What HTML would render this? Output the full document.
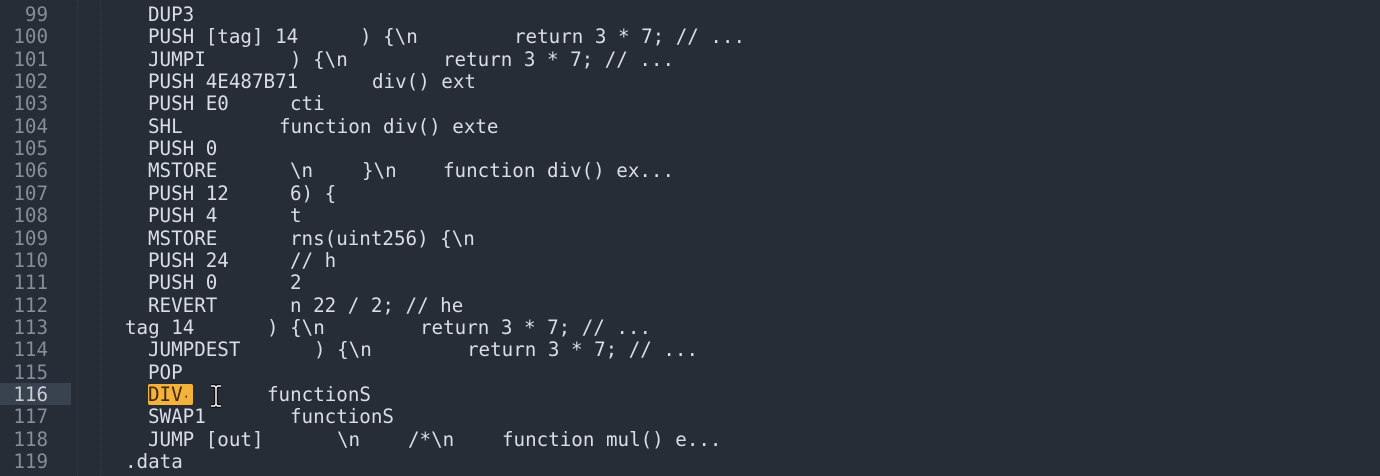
<!DOCTYPE html>
<html><head><meta charset="utf-8"><style>
body{margin:0;width:1380px;height:476px;background:#272d37;overflow:hidden;position:relative;font-family:"DejaVu Sans Mono","Liberation Mono",monospace;font-size:19.2px;color:#d9dee4}
.l{position:absolute;left:0;width:1380px;height:22.35px;line-height:22.35px}
.n{position:absolute;right:1332px;color:#868d97}
.t{position:absolute;white-space:pre}
.g{position:absolute;top:0;bottom:0;width:0;border-left:1px dotted #363d47}
</style></head><body>
<div style="position:absolute;left:0;top:383px;width:71px;height:22px;background:#38434f"></div>
<div class="g" style="left:77px"></div>
<div class="g" style="left:100px"></div>
<div style="position:absolute;left:148px;top:384px;width:45px;height:21px;background:#f4b23a;border-radius:2px"></div>
<svg style="position:absolute;left:208px;top:384px" width="16" height="24" viewBox="0 0 16 24"><path d="M3 2h3.5l1.5 1.5 1.5-1.5H13M8 3.5v17M3 22h3.5L8 20.5 9.5 22H13" stroke="#000" stroke-width="3.4" fill="none"/><path d="M3 2h3.5l1.5 1.5 1.5-1.5H13M8 3.5v17M3 22h3.5L8 20.5 9.5 22H13" stroke="#fff" stroke-width="1.5" fill="none"/></svg>
<div id="c"></div>
<script>
var L=[
[99,[[148,"DUP3"]]],
[100,[[148,"PUSH [tag] 14"],[360,") {\\n"],[514,"return 3 * 7; // ..."]]],
[101,[[148,"JUMPI"],[290,") {\\n"],[443,"return 3 * 7; // ..."]]],
[102,[[148,"PUSH 4E487B71"],[372,"div() ext"]]],
[103,[[148,"PUSH E0"],[290,"cti"]]],
[104,[[148,"SHL"],[279,"function div() exte"]]],
[105,[[148,"PUSH 0"]]],
[106,[[148,"MSTORE"],[290,"\\n"],[362,"}\\n"],[443,"function div() ex..."]]],
[107,[[148,"PUSH 12"],[290,"6) {"]]],
[108,[[148,"PUSH 4"],[290,"t"]]],
[109,[[148,"MSTORE"],[290,"rns(uint256) {\\n"]]],
[110,[[148,"PUSH 24"],[290,"// h"]]],
[111,[[148,"PUSH 0"],[290,"2"]]],
[112,[[148,"REVERT"],[290,"n 22 / 2; // he"]]],
[113,[[125,"tag 14"],[267,") {\\n"],[420,"return 3 * 7; // ..."]]],
[114,[[148,"JUMPDEST"],[314,") {\\n"],[467,"return 3 * 7; // ..."]]],
[115,[[148,"POP"]]],
[116,[[148,"DIV<span style='font-size:12px'>·</span>","#3a2a10"],[267,"functionS"]]],
[117,[[148,"SWAP1"],[290,"functionS"]]],
[118,[[148,"JUMP [out]"],[337,"\\n"],[408,"/*\\n"],[502,"function mul() e..."]]],
[119,[[125,".data"]]]];
var h="";
L.forEach(function(r,i){
 h+='<div class="l" style="top:'+(4+i*22.35)+'px"><span class="n"'+(r[0]==116?' style="color:#c9ced4"':'')+'>'+r[0]+'</span>';
 r[1].forEach(function(s){h+='<span class="t" style="left:'+s[0]+'px'+(s[2]?';color:'+s[2]:'')+'">'+s[1]+'</span>';});
 h+='</div>';});
document.getElementById("c").innerHTML=h;
</script>
</body></html>
